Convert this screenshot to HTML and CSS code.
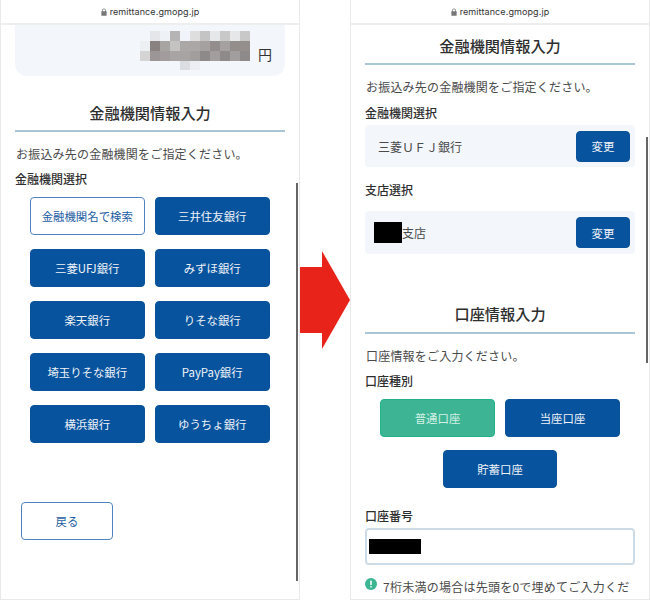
FILE: index.html
```html
<!DOCTYPE html>
<html lang="ja">
<head>
<meta charset="utf-8">
<title>remittance.gmopg.jp</title>
<link rel="stylesheet" href="styles.css">
</head>
<body>
<main class="stage">
  <section class="phone">
    <header class="urlbar">
      <svg class="lock" viewBox="0 0 8 10" width="6" height="8"><path d="M1.6 4V2.8a2.4 2.4 0 0 1 4.8 0V4H7.5v6h-7V4zM2.6 4h2.8V2.8a1.4 1.4 0 0 0-2.8 0z" fill="#777"/></svg>
      <span>remittance.gmopg.jp</span>
    </header>
    <div class="screen">
      <div class="amount">
        <div class="mosaic">
          <i style="background:#f3f7fc"></i><i style="background:#e4e6e9"></i><i style="background:#eef1f5"></i><i style="background:#b5b3b3"></i><i style="background:#f0f4fa"></i><i style="background:#dedede"></i><i style="background:#c4c4c4"></i><i style="background:#e6e7e9"></i><i style="background:#c8c8c8"></i><i style="background:#e6e7e9"></i><i style="background:#c8c8c8"></i>
          <i style="background:#edf0f3"></i><i style="background:#8a8280"></i><i style="background:#a8a4a2"></i><i style="background:#c4c3c2"></i><i style="background:#aaa7a6"></i><i style="background:#aaa7a6"></i><i style="background:#a5a1a0"></i><i style="background:#938d8c"></i><i style="background:#a5a1a0"></i><i style="background:#938d8c"></i><i style="background:#948e8d"></i>
          <i style="background:#d4d4d4"></i><i style="background:#9c9696"></i><i style="background:#a29d9c"></i><i style="background:#a8a4a3"></i><i style="background:#a8a4a3"></i><i style="background:#a29e9d"></i><i style="background:#8f8a8a"></i><i style="background:#a29e9d"></i><i style="background:#8f8a8a"></i><i style="background:#a29e9d"></i><i style="background:#8f8a8a"></i>
          <i style="background:#f3f7fc"></i><i style="background:#f3f7fc"></i><i style="background:#f3f7fc"></i><i style="background:#f3f7fc"></i><i style="background:#dcdde0"></i><i style="background:#eceef1"></i><i style="background:#f3f7fc"></i><i style="background:#f3f7fc"></i><i style="background:#f3f7fc"></i><i style="background:#f3f7fc"></i><i style="background:#f3f7fc"></i>
        </div>
        <span class="yen">円</span>
      </div>
      <h2 class="title title-first">金融機関情報入力</h2>
      <p class="lead">お振込み先の金融機関をご指定ください。</p>
      <h3 class="label">金融機関選択</h3>
      <div class="choices choices-bank">
        <button class="btn btn-outline">金融機関名で検索</button>
        <button class="btn">三井住友銀行</button>
        <button class="btn">三菱UFJ銀行</button>
        <button class="btn">みずほ銀行</button>
        <button class="btn">楽天銀行</button>
        <button class="btn">りそな銀行</button>
        <button class="btn">埼玉りそな銀行</button>
        <button class="btn">PayPay銀行</button>
        <button class="btn">横浜銀行</button>
        <button class="btn">ゆうちょ銀行</button>
      </div>
      <button class="btn btn-outline btn-back">戻る</button>
    </div>
    <div class="scrollbar scrollbar-left"></div>
  </section>

  <svg class="arrow" viewBox="0 0 50 98" width="50" height="98"><polygon points="0,16 22,16 22,0 50,49 22,98 22,82 0,82" fill="#e8231a"/></svg>

  <section class="phone">
    <header class="urlbar">
      <svg class="lock" viewBox="0 0 8 10" width="6" height="8"><path d="M1.6 4V2.8a2.4 2.4 0 0 1 4.8 0V4H7.5v6h-7V4zM2.6 4h2.8V2.8a1.4 1.4 0 0 0-2.8 0z" fill="#777"/></svg>
      <span>remittance.gmopg.jp</span>
    </header>
    <div class="screen">
      <h2 class="title title-top">金融機関情報入力</h2>
      <p class="lead">お振込み先の金融機関をご指定ください。</p>
      <h3 class="label label-picked">金融機関選択</h3>
      <div class="picked">
        <span class="picked-name">三菱ＵＦＪ銀行</span>
        <button class="btn btn-small">変更</button>
      </div>
      <h3 class="label label-branch">支店選択</h3>
      <div class="picked picked-branch">
        <span class="picked-name branch"><span class="redact redact-branch"></span>支店</span>
        <button class="btn btn-small">変更</button>
      </div>
      <h2 class="title title-account">口座情報入力</h2>
      <p class="lead">口座情報をご入力ください。</p>
      <h3 class="label">口座種別</h3>
      <div class="choices choices-center">
        <button class="btn btn-selected">普通口座</button>
        <button class="btn">当座口座</button>
        <button class="btn">貯蓄口座</button>
      </div>
      <h3 class="label label-number">口座番号</h3>
      <div class="field"><span class="redact redact-number"></span></div>
      <p class="note">
        <svg class="note-icon" viewBox="0 0 12 12" width="12" height="12"><circle cx="6" cy="6" r="6" fill="#3cb593"/><rect x="5.2" y="2.4" width="1.6" height="4.6" rx=".6" fill="#fff"/><rect x="5.2" y="8" width="1.6" height="1.6" rx=".6" fill="#fff"/></svg>
        <span>7桁未満の場合は先頭を0で埋めてご入力ください。</span>
      </p>
    </div>
    <div class="scrollbar scrollbar-right"></div>
  </section>
</main>
</body>
</html>
```
FILE: styles.css
```css
* { box-sizing: border-box; }
html, body { margin: 0; padding: 0; background: #fff; }
body {
  font-family: "Noto Sans CJK JP", "Noto Sans", sans-serif;
  color: #3b3b3b;
  overflow: hidden;
}
.stage {
  width: 650px;
  height: 600px;
  display: flex;
  justify-content: space-between;
  align-items: center;
}
.phone {
  position: relative;
  width: 300px;
  height: 600px;
  border-right: 1px solid #e9e9e9;
  border-left: 1px solid #e9e9e9;
  border-bottom: 1px solid #e9e9e9;
  overflow: hidden;
  background: #fff;
  flex: none;
}
.arrow { flex: none; }
.urlbar {
  height: 25px;
  border-bottom: 2px solid #eeeeee;
  display: flex;
  align-items: center;
  justify-content: center;
  gap: 3px;
  font-family: "Inter", "Noto Sans", sans-serif;
  font-size: 9px;
  letter-spacing: .1px;
  color: #333;
}
.screen {
  height: 574px;
  padding: 0 14px;
  overflow: hidden;
}
.amount {
  height: 51px;
  background: #f3f7fc;
  border-radius: 0 0 12px 12px;
  display: flex;
  align-items: flex-start;
  justify-content: flex-end;
  padding: 6px 13px 0 0;
}
.mosaic {
  display: grid;
  grid-template-columns: repeat(11, 10px);
  grid-auto-rows: 10px;
  height: 39px;
  overflow: hidden;
}
.mosaic i { display: block; }
.yen { font-size: 14px; line-height: 18px; margin: 14px 0 0 8px; color: #333; }
.title {
  margin: 0;
  font-size: 15.2px;
  line-height: 22px;
  font-weight: 500;
  color: #2e2e2e;
  text-align: center;
  border-bottom: 2px solid #a9c6d6;
}
.title-first { margin-top: 25px; height: 31px; }
.title-top { margin-top: 9px; height: 31px; }
.title-account { margin-top: 48px; height: 32px; }
.lead {
  margin: 13px 0 0 1px;
  font-size: 12px;
  line-height: 18px;
  letter-spacing: .2px;
  color: #4a4a4a;
}
.label {
  margin: 7px 0 0;
  font-size: 12px;
  line-height: 18px;
  font-weight: 500;
  color: #2e2e2e;
}
.label-picked { margin-top: 8px; }
.choices {
  display: flex;
  flex-wrap: wrap;
  gap: 13px 10.5px;
  margin: 9px 0 0 15px;
  width: 240px;
}
.choices-bank { gap: 14px 10.5px; }
.choices-center { justify-content: center; }
.btn {
  width: 114.5px;
  height: 38px;
  border: 1px solid #0a5299;
  border-radius: 4px;
  background: #07539d;
  color: #f0f4f9;
  font-family: inherit;
  font-size: 11.4px;
  padding: 0;
}
.btn-outline {
  background: #fff;
  color: #1f5ea3;
  border-color: #4f83bd;
}
.btn-selected {
  background: #3db594;
  border-color: #25b08c;
  color: #d3f0e5;
}
.btn-back {
  display: block;
  width: 92px;
  margin: 59px 0 0 6px;
}
.btn-small {
  width: 54px;
  height: 31px;
}
.picked {
  height: 42px;
  margin-top: 3px;
  background: #f3f7fc;
  border-radius: 4px;
  display: flex;
  align-items: center;
  justify-content: space-between;
  padding: 0 5px 0 13px;
}
.picked-name { font-size: 12px; color: #4a4a4a; display: flex; align-items: center; }
.branch { margin-left: -4px; }
.picked-branch { margin-top: 12px; height: 43px; }
.label-branch { margin-top: 14px; }
.redact { display: block; background: #000; }
.redact-branch { width: 28px; height: 21px; }
.redact-number { width: 52px; height: 15px; }
.label-number { margin-top: 19px; }
.field {
  height: 37px;
  margin-top: 3px;
  border: 2px solid #cddbe6;
  border-radius: 4px;
  background: #fff;
  display: flex;
  align-items: center;
  padding-left: 2px;
}
.note {
  margin: 12px 0 0;
  height: 20px;
  overflow: hidden;
  display: flex;
  gap: 6px;
  font-size: 12px;
  line-height: 20px;
  letter-spacing: .25px;
  color: #4a4a4a;
}
.note-icon { flex: none; margin-top: 1px; }
.scrollbar {
  position: absolute;
  width: 2px;
  background: #666;
  right: 1px;
}
.scrollbar-left { top: 183px; height: 398px; }
.scrollbar-right { top: 137px; height: 226px; }
```
